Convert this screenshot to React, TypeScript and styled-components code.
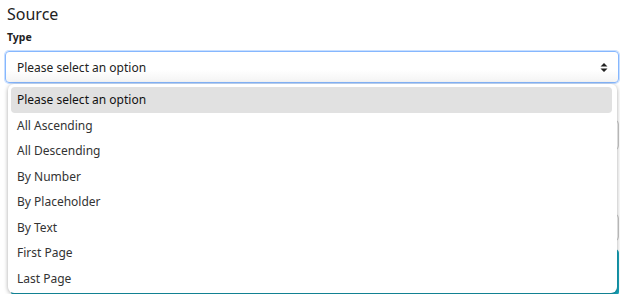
import React from "react";
import styled, { createGlobalStyle } from "styled-components";

const Global = createGlobalStyle`
  html, body { margin: 0; padding: 0; background: #fff; }
  body { font-family: "Segoe UI", "Noto Sans", "Open Sans", sans-serif; color: #212529; overflow: hidden; }
`;

const Page = styled.div`
  padding: 0 1px 0 5px;
  width: 614px;
  height: 294px;
  overflow: hidden;
`;

const Title = styled.div`
  font-size: 16px;
  line-height: 24px;
  padding: 2px 0 0 2px;
  color: #222;
`;

const Label = styled.div`
  font-size: 10.5px;
  font-weight: 700;
  line-height: 14px;
  padding: 4px 0 0 2px;
  color: #222;
`;

const Field = styled.div`
  position: relative;
  margin-top: 7px;
`;

const Select = styled.div`
  height: 32px;
  box-sizing: border-box;
  border: 1px solid #86b7fe;
  border-radius: 4px;
  box-shadow: 0 0 0 1px rgba(134, 183, 254, 0.45);
  background: linear-gradient(#fff 60%, #f4f4f4);
  display: flex;
  align-items: center;
  justify-content: space-between;
  padding: 0 10px 0 11px;
  font-size: 12px;
  color: #222;
`;

const Menu = styled.div`
  position: absolute;
  left: 3px;
  right: 2px;
  top: 33px;
  height: 209px;
  background: #fff;
  border-radius: 6px;
  box-shadow: 0 1px 4px rgba(0, 0, 0, 0.35);
  padding: 3px 5px 0 3px;
  box-sizing: border-box;
  z-index: 2;
`;

const Option = styled.div<{ $active?: boolean }>`
  height: 25.5px;
  display: flex;
  align-items: center;
  padding-left: 6px;
  border-radius: 4px;
  font-size: 12px;
  color: ${(p) => (p.$active ? "#111" : "#333")};
  background: ${(p) => (p.$active ? "#e1e1e1" : "transparent")};
`;

const Under = styled.div`
  display: flex;
  flex-direction: column;
  padding-left: 6px;
`;

const Ghost = styled.div<{ $h: number; $mt: number; $teal?: boolean }>`
  height: ${(p) => p.$h}px;
  margin-top: ${(p) => p.$mt}px;
  border: 1px solid ${(p) => (p.$teal ? "#17a2b8" : "#c8c8c8")};
  border-radius: 4px;
  background: ${(p) => (p.$teal ? "#17a2b8" : "#fff")};
`;

const options = [
  "Please select an option",
  "All Ascending",
  "All Descending",
  "By Number",
  "By Placeholder",
  "By Text",
  "First Page",
  "Last Page",
];

export default function App() {
  return (
    <Page>
      <Global />
      <Title>Source</Title>
      <Label>Type</Label>
      <Field>
        <Select>
          <span>Please select an option</span>
          <svg width="8" height="11" viewBox="0 0 8 11">
            <path d="M4 1 L7.5 4.5 H0.5 Z M4 10 L7.5 6.5 H0.5 Z" fill="#222" />
          </svg>
        </Select>
        <Menu>
          {options.map((o, i) => (
            <Option key={o} $active={i === 0}>
              {o}
            </Option>
          ))}
        </Menu>
        <Under>
          <Ghost $h={28} $mt={37} />
          <Ghost $h={25} $mt={64} />
          <Ghost $h={45} $mt={8} $teal />
        </Under>
      </Field>
    </Page>
  );
}
